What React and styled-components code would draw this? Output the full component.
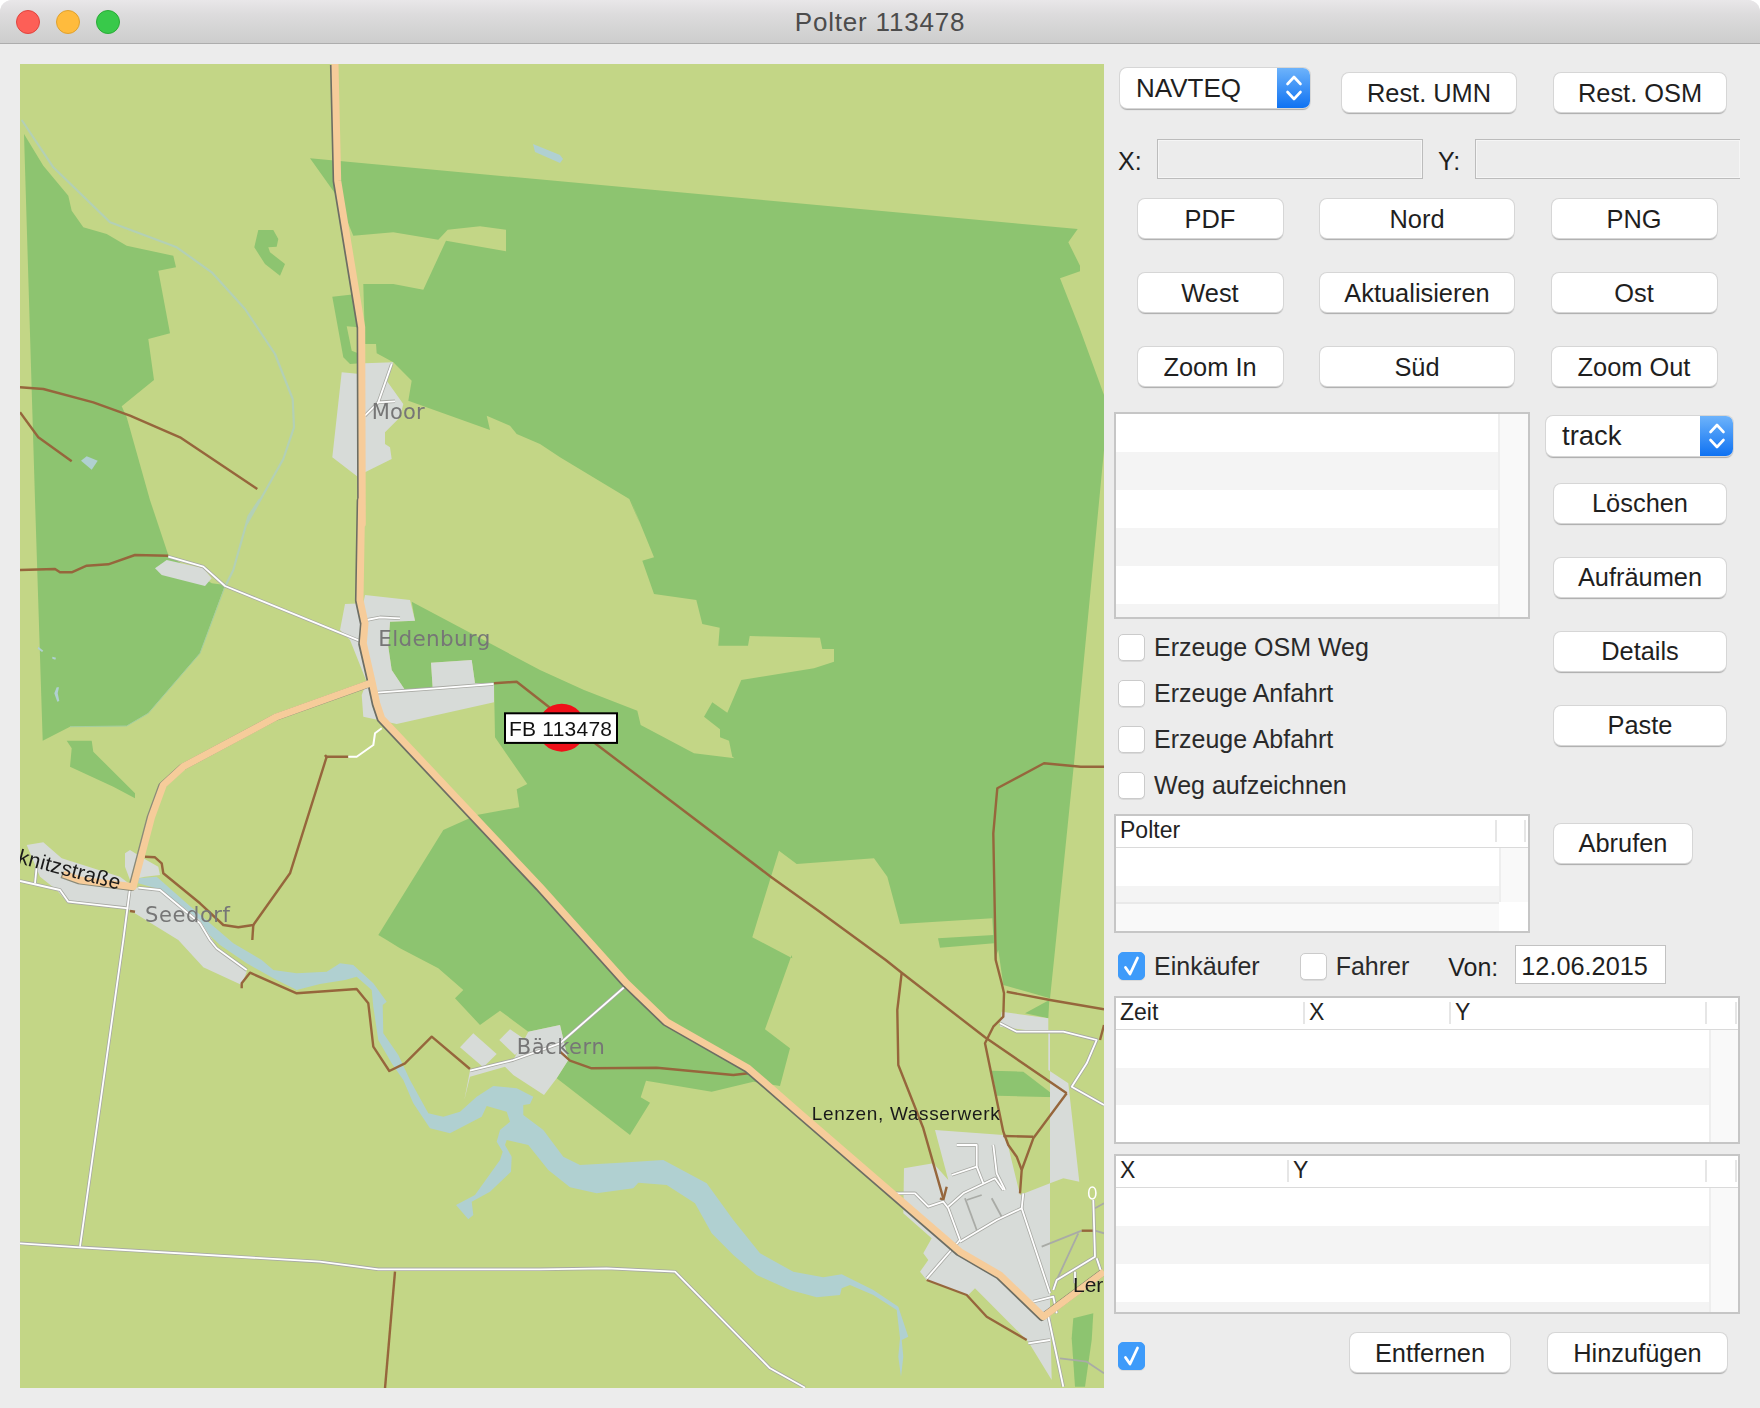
import React from "react";
import styled, { createGlobalStyle } from "styled-components";

const Global = createGlobalStyle`
  html, body { margin: 0; padding: 0; background: #fff; }
  body { width: 1760px; height: 1408px; overflow: hidden; font-family: "Liberation Sans", Arial, sans-serif; }
`;

const Window = styled.div`
  width: 1760px; height: 1408px; background: #ececec; display: flex; flex-direction: column;
  border-radius: 12px 12px 0 0; overflow: hidden;
`;
const TitleBar = styled.div`
  height: 44px; box-sizing: border-box; flex: none; display: flex; align-items: center; gap: 16px; padding-left: 16px;
  background: linear-gradient(#e9e7e9, #dcdbdc 35%, #cdcdcd);
  border-bottom: 1px solid #adadad;
`;
const Light = styled.span`
  width: 24px; height: 24px; border-radius: 50%; box-sizing: border-box;
  background: ${p => p.$c}; border: 1px solid ${p => p.$b};
`;
const Title = styled.div`
  flex: 1; text-align: center; font-size: 26px; color: #4c4c4c; letter-spacing: 0.8px; margin-left: -136px; padding-top: 2px;
`;
const Body = styled.div`
  display: flex; padding: 20px 0 20px 20px; flex: 1;
`;
const MapBox = styled.div`
  width: 1084px; height: 1324px; flex: none; overflow: hidden; background: #c3d686;
  svg { display: block; filter: blur(0.45px); }
`;
const Side = styled.div`
  width: 656px; flex: none; display: flex; flex-direction: column; color: #1f1f1f; font-size: 25px;
`;
const TopRow = styled.div`
  display: flex; align-items: flex-start; padding-left: 16px; margin-top: 4px; height: 45px;
`;
const Combo = styled.div`
  width: ${p => p.$w}px; height: 40px; box-sizing: border-box; background: #fff; border-radius: 7px; display: flex;
  overflow: hidden; align-items: stretch; font-size: ${p => p.$fs}px;
  box-shadow: 0 0 0 1px #d6d6d6, 0 1.5px 1px rgba(0,0,0,.28);
`;
const ComboText = styled.span`
  flex: 1; padding-left: 16px; line-height: 40px;
`;
const ComboArrows = styled.span`
  width: 33px; flex: none; display: flex; align-items: center; justify-content: center;
  background: linear-gradient(#6db3fb, #0f72f2);
`;
const Button = styled.button`
  width: ${p => p.$w}px; height: 39px; box-sizing: border-box; padding: ${p => p.$pt || 0}px 0 0; margin: ${p => p.$m || "0"};
  background: #fff; border: none; border-radius: 7px; font: inherit; font-size: 25.4px; color: #1f1f1f;
  box-shadow: 0 0 0 1px #d6d6d6, 0 1.5px 1px rgba(0,0,0,.28); flex: none;
`;
const CoordRow = styled.div`
  display: flex; align-items: center; padding-left: 14px; margin-top: 26px; height: 40px;
`;
const CoordLabel = styled.span`
  width: ${p => p.$w}px; flex: none; padding-top: 4px; padding-left: ${p => p.$pl || 0}px; box-sizing: border-box;
`;
const CoordInput = styled.div`
  width: ${p => p.$w}px; height: 40px; box-sizing: border-box; flex: none;
  background: #ececec; border: 1px solid #bcbcbc; border-right: ${p => p.$open ? "none" : "1px solid #bcbcbc"};
  box-shadow: inset 0 0 0 1px #f5f5f5;
`;
const NavGrid = styled.div`
  display: grid; grid-template-columns: 145px 194px 165px; column-gap: 37.5px; row-gap: 35px;
  margin: 20px 0 0 33.5px;
`;
const Mid = styled.div`
  display: flex; margin-top: 26px; padding-left: 10px; gap: 16px;
`;
const MidLeft = styled.div`
  width: 416px; flex: none; display: flex; flex-direction: column;
`;
const MidRight = styled.div`
  display: flex; flex-direction: column; align-items: flex-start; padding-top: 4px;
`;
const Frame = styled.div`
  box-sizing: border-box; width: ${p => p.$w}px; height: ${p => p.$h}px; border: 2px solid #c6c6c6; background: #fff;
  display: flex; flex-direction: column; overflow: hidden; flex: none; margin-top: ${p => p.$mt || 0}px;
  margin-left: ${p => p.$ml || 0}px;
`;
const HeaderRow = styled.div`
  display: flex; height: 32px; box-sizing: border-box; flex: none; padding-top: 4px; border-bottom: 1px solid #dadada;
`;
const HeaderCell = styled.div`
  width: ${p => p.$w}px; height: 22px; flex: none; box-sizing: border-box; padding-left: 4px; line-height: 21px;
  font-size: 23px; border-right: 2px solid #e6e6e6; color: #222;
`;
const RowsWrap = styled.div`
  display: flex; flex: ${p => p.$h ? "none" : 1}; height: ${p => p.$h ? `${p.$h}px` : "auto"}; overflow: hidden;
`;
const Rows = styled.div`
  flex: 1; overflow: hidden;
`;
const Row = styled.div`
  height: ${p => p.$h}px; background: ${p => p.$alt ? "#f4f4f4" : "#fff"};
`;
const ScrollCol = styled.div`
  width: ${p => p.$w}px; flex: none; background: #f9f9f9; border-left: 2px solid #eee; box-sizing: border-box;
`;
const LowerBand = styled.div`
  flex: 1; display: flex; border-top: 2px solid #e9e9e9; margin-right: 29px; background: #f9f9f9;
`;
const Checks = styled.div`
  display: flex; flex-direction: column; gap: 19px; margin: 15px 0 0 4px;
`;
const CheckRow = styled.label`
  display: flex; align-items: center; height: 27px; gap: 9px; flex: none; color: #2a2a2a;
  margin: ${p => p.$m || "0"};
`;
const Box = styled.span`
  width: 27px; height: ${p => p.$on ? 28 : 27}px; box-sizing: border-box; border-radius: 5px; flex: none;
  display: flex; align-items: center; justify-content: center;
  background: ${p => p.$on ? "#3e9bfa" : "#fff"};
  border: 1px solid ${p => p.$on ? "#3e9bfa" : "#cbcbcb"};
  box-shadow: 0 1px 0 rgba(0,0,0,.08);
`;
const FilterRow = styled.div`
  display: flex; align-items: center; height: 39px; margin-top: 12px; padding-left: 14px;
`;
const VonLabel = styled.span`
  margin-left: 39px; width: 67px; flex: none; padding-top: 5px;
`;
const DateInput = styled.div`
  width: 151px; height: 39px; box-sizing: border-box; background: #fff; border: 1px solid #c2c2c2; padding-left: 5px; line-height: 41px;
  font-size: 25.3px; flex: none;
`;
const BottomRow = styled.div`
  display: flex; align-items: flex-start; height: 39px; margin-top: 19px; padding-left: 14px;
`;

/* map helpers */
const z = (x0, y0) => s => s.trim().split(/\s+/).map(p => {
  const [a, b] = p.split(",").map(Number);
  return `${(x0 + a / 3).toFixed(1)},${(y0 + b / 3).toFixed(1)}`;
}).join(" ");
const A = z(20, 64), B = z(560, 64), C = z(20, 500), D = z(584, 500), E = z(20, 940), F = z(400, 940), G = z(800, 950);
const J = (...a) => a.join(" ");

const forest = [
  J(A("870,283"), B("1553,495 1525,535 1560,605 1560,622 1500,643 1558,790"), "1104,395 1104,450",
    D("1470,790 1410,1380"), G("750,145 610,105 595,0"), D("1232,1380 1225,1255 948,1272 910,1130 870,1075 638,1092 585,1052 505,1312 625,1375"),
    F("1175,45 1095,268 1170,325 1140,438 1060,425 935,455 738,422 722,472 750,488 690,585 470,415 505,360 480,255 385,275 300,212 240,255 165,175 190,150 115,85 0,25"),
    E("1100,0"), C("1075,1305 1270,990 1370,945 1498,922 1490,868 1522,852 1425,712 1422,550 1365,550 1355,480 1233,488 1238,565 1155,570 1115,510 1105,440 1110,365 1185,362 1175,305 1560,510"),
    D("0,570 160,632 170,675 330,760 495,780 503,808 445,770 435,722 408,712 408,688 360,650 385,607 430,638 472,540 690,505 750,485 750,447 715,447 708,413 497,408 492,437 403,437 407,383 355,372 337,300 210,282 175,182 210,172 140,0"),
    B("240,1380 208,1305 0,1180"),
    A("1560,1140 1490,1110 1470,1085 1400,1055 1410,1098 1165,1010 1175,950 1120,895 1070,868 1068,840 1035,840 1030,660 1120,660 1210,677 1278,530 1458,562 1458,497 1380,487 1283,497 1255,527 1120,505 1000,515 950,395")),
  J(A("12,210 70,305 145,395 155,440 190,490 260,510 320,545 460,575 468,610 415,620 450,808 385,825 402,948 305,1027 320,1060 410,1380"),
    C("390,0 445,165 575,250 615,255 540,460 385,640 320,678 150,680 68,722 45,0")),
  A("937,698 1010,690 1018,790 980,787 995,860 1020,870 1020,898 990,900 970,880"),
  A("715,498 760,498 775,525 770,548 745,550 750,565 795,600 780,635 735,600 703,550"),
  C("140,722 215,722 220,755 345,880 345,895 280,860 150,800 155,745"),
  D("1062,1315 1230,1305 1230,1330 1068,1343"),
  G("575,362 670,365 770,442 590,437"),
  G("675,190 748,150 745,205"),
  G("820,1105 880,1090 875,1170 855,1310 825,1310 815,1165"),
];

const builtup = [
  A("965,925 1020,930 1035,898 1120,895 1100,950 1150,1020 1140,1060 1095,1105 1095,1140 1110,1150 1115,1185 1035,1225 1015,1240 937,1180"),
  C("975,312 1030,310 1035,285 1170,300 1185,362 1110,365 1105,440 1115,510 1155,570 1238,565 1233,488 1355,480 1365,550 1422,550 1422,607 1130,672 1030,650 1025,585 1040,545 990,420 960,390"),
  C("405,205 440,180 550,205 575,235 555,258 425,225"),
  C("315,1060 330,1050 370,1075 415,1100 420,1125 375,1130 330,1140 315,1100"),
  J(C("20,1035 70,1027 125,1075 300,1130 340,1160 430,1175 540,1260"), E("590,20 680,95 665,135 550,82 475,0"), C("320,1225 140,1205 110,1170 60,1130")),
  F("180,322 220,280 290,342 250,382"),
  F("298,300 330,268 385,305 345,345"),
  F("385,275 480,255 505,360 470,415 432,465 340,405 315,380 210,410 193,480 210,392 340,360"),
  G("405,540 610,555 625,590 660,735 750,700 750,250 600,230 605,185 745,205 745,360 805,400 838,695 790,685 750,700 750,1060 755,1290 685,1175 525,1015 505,1035 380,990 360,965 385,930 370,910 395,865 310,790 312,655 400,640 445,690"),
];

const river = J(
  C("355,1135 410,1130 500,1210 640,1330 725,1380"),
  E("760,90 830,100 920,95 960,70 1000,75 1060,130 1100,185 1088,195 1090,280 1135,345 1170,420 1225,520 1270,530 1320,515 1370,470 1420,438 1490,445 1540,470 1530,492"),
  F("370,495 370,525 430,570 490,650 540,675 660,668 790,660 920,730 1000,840 1080,940 1180,995 1270,1012 1325,1003 1420,1050 1495,1100 1525,1190 1505,1200 1510,1250 1503,1310 1495,1250 1500,1195 1490,1110 1420,1065 1350,1035 1325,1045 1320,1065 1250,1072 1170,1050 1070,1005 1000,945 935,880 885,790 800,735 715,728 700,745 590,760 510,742 445,690 385,615 320,600 315,615 335,650 333,695 270,755 215,785 220,825 205,838 168,795 225,765 300,660 308,635 290,605 300,570 330,545 320,515 260,498 245,530 150,580 90,565 40,490"),
  E("1150,420 1115,370 1075,300 1060,200 1055,150 1010,110 975,120 900,132 830,150 760,115 680,70 600,15"),
  C("425,1170 355,1150"));

const ponds = [
  A("183,1190 200,1177 233,1190 215,1217"),
  "533,144 560,155 563,159 560,163 535,152",
  C("110,562 103,580 112,605 118,603 113,580 117,562"),
  C("55,440 70,452 66,456 53,446"),
  C("97,470 108,473 106,479 97,476"),
];

const creek = J(A("5,168 100,310 270,475 470,550 575,625 675,735 765,870 818,1005 822,1090 790,1185 680,1380"), C("718,0 685,50 640,210 615,260"));
const creek2 = C("615,260 540,460 385,640 320,678 150,680");

const brown = [
  A("0,970 70,975 220,1015 330,1055 480,1120 712,1275"),
  A("0,1045 55,1120 155,1192"),
  C("0,210 105,207 120,217 155,217 200,197 265,193 345,165 445,167"),
  J(C("1422,550 1490,545 1560,600"), D("40,735 560,1130 700,1230 905,1380"), G("305,68 555,262 800,430")),
  C("985,770 920,770 810,1120 700,1275 655,1282 610,1275 540,1210 430,1120 425,1090 405,1072 375,1070"),
  C("700,1275 697,1320"),
  C("915,765 922,775"),
  C("330,1233 345,1235"),
  E("665,145 665,130 690,98 830,160 1010,147 1045,190 1060,320 1108,393 1155,370 1235,290 1350,387"),
  E("1125,995 1095,1345"),
  F("480,335 510,362 575,385 770,383 1000,405 1045,400"),
  G("305,68 292,180 295,345 370,535 430,745"),
  G("440,710 430,750 420,745"),
  J(D("1560,800 1490,800 1380,790 1240,865 1228,1000 1235,1380"), G("605,100 612,130 610,200 580,230 555,280 610,545 625,585 650,620 665,660 660,730")),
  G("665,660 700,565 800,430"),
  G("610,558 700,560"),
  G("620,125 750,150 912,178"),
  G("912,225 900,270"),
  G("845,842 885,842"),
  G("380,990 500,1035 560,1100 680,1170"),
];

const tracks = [
  C("445,170 550,200 615,258 1025,425"),
  C("1040,360 1080,352 1140,355"),
  C("1070,578 1250,565 1420,552"),
  A("1115,900 1075,1015 1125,1012"),
  A("1075,1015 1035,1055"),
  C("0,1143 120,1170 145,1205 325,1225"),
  J(C("330,1165"), E("310,0 180,920")),
  C("45,1150 50,1100"),
  J(C("355,1163 420,1170 540,1270"), E("570,0 590,25 680,90")),
  J(E("0,910 180,922 900,965 1075,988"), F("420,988 620,985 825,995 1110,1285 1215,1343")),
  F("210,392 340,360 480,310 680,135"),
  G("600,220 650,245 790,245 890,270 860,340 815,410 912,465"),
  G("285,730 345,730 385,770 430,755 445,775 480,870"),
  G("445,770 490,730 585,685 610,720"),
  G("470,585 530,585 530,650 455,675"),
  G("580,585 590,670 615,720"),
  G("530,650 550,700"),
  G("480,875 590,810 665,775 750,1030"),
  G("480,870 380,985"),
  G("670,730 665,775"),
  G("745,1100 790,1310"),
  G("880,750 885,920 770,990 760,1020"),
  G("890,925 905,970"),
  G("825,965 825,1000"),
  G("685,1180 750,1170"),
  G("700,1055 760,1040 770,1090"),
];
const greyLines = [
  G("725,890 845,842"), G("770,990 835,850"), G("780,1225 860,1235 912,1270"),
  G("495,745 530,840"), G("575,745 605,800"), G("500,750 545,735"), G("885,775 912,760"), G("885,842 912,850"),
];
const mainRoad = J(A("945,0 953,350 1025,790 1027,1380"),
  C("1025,0 1020,300 1035,370 1030,430 1055,540 1070,610 1085,655 1560,1160"),
  F("680,130 800,245 1045,385 1200,520"), G("480,905 600,975 730,1100 912,965"));
const branch = C("1050,550 770,650 490,800 430,855 395,950 340,1160 180,1140 130,1122");

const Poly = styled.polygon`fill: ${p => p.$c};`;
const Line = styled.polyline`
  fill: none; stroke: ${p => p.$c}; stroke-width: ${p => p.$w}; stroke-linejoin: round;
`;
const MapText = styled.text`
  font-family: ${p => p.$sans ? `"Liberation Sans", sans-serif` : `"DejaVu Sans", sans-serif`};
  font-size: ${p => p.$s}px; fill: ${p => p.$c};
`;

const MapView = () => (
  <svg width="1084" height="1324" viewBox="20 64 1084 1324">
    <rect x="20" y="64" width="1084" height="1324" fill="#c3d686" />
    {forest.map((p, i) => <Poly key={i} points={p} $c="#8dc470" />)}
    <Poly points={river} $c="#b0d0d1" />
    {ponds.map((p, i) => <Poly key={i} points={p} $c="#b0d0d1" />)}
    <Line points={creek} $c="#b3d0b5" $w="2.2" />
    <Line points={creek2} $c="#a5cfa0" $w="1" />
    {builtup.map((p, i) => <Poly key={i} points={p} $c="#d7dbd8" />)}
    {greyLines.map((p, i) => <Line key={i} points={p} $c="#a9aba6" $w="1.8" />)}
    {brown.map((p, i) => <Line key={i} points={p} $c="#96663c" $w="2.4" />)}
    {tracks.map((p, i) => <Line key={i} points={p} $c="#a8a9a4" $w="3.4" />)}
    {tracks.map((p, i) => <Line key={i} points={p} $c="#fff" $w="1.8" />)}
    <Line points={C("985,770 1010,770 1060,735 1065,700 1085,685")} $c="#fff" $w="2" />
    <ellipse cx="1092.3" cy="1193" rx="3.6" ry="6" fill="none" stroke="#fff" strokeWidth="1.6" />
    <g transform="translate(-1.6,0.8)">
      <Line points={mainRoad} $c="#6d6e64" $w="7" />
      <Line points={branch} $c="#8a8a78" $w="7" />
    </g>
    <Line points={branch} $c="#f6cc9a" $w="7" />
    <Line points={mainRoad} $c="#f6cc9a" $w="7" />
    <MapText x="371.7" y="419" $s="21" $c="#767676" textLength="53">Moor</MapText>
    <MapText x="378.3" y="645.7" $s="21.5" $c="#767676" textLength="112">Eldenburg</MapText>
    <MapText x="145" y="921.7" $s="21" $c="#767676" textLength="85">Seedorf</MapText>
    <MapText x="516.7" y="1054" $s="21" $c="#767676" textLength="88">Bäckern</MapText>
    <MapText x="811.7" y="1120" $s="19" $c="#1a1a1a" $sans textLength="188">Lenzen, Wasserwerk</MapText>
    <MapText x="1073" y="1291.7" $s="21" $c="#1a1a1a" $sans>Ler</MapText>
    <g transform="translate(17,863) rotate(14.7)">
      <MapText x="0" y="0" $s="21" $c="#1a1a1a" $sans textLength="105">knitzstraße</MapText>
    </g>
    <circle cx="561.7" cy="727.7" r="24" fill="#f01019" />
    <rect x="505" y="713.3" width="112" height="29.6" fill="#fff" stroke="#000" strokeWidth="2" />
    <MapText x="509" y="735.5" $s="21" $c="#111" $sans textLength="103">FB 113478</MapText>
  </svg>
);

const Arrows = () => (
  <svg width="20" height="32" viewBox="0 0 20 32" fill="none" stroke="#fff" strokeWidth="2.6" strokeLinecap="round" strokeLinejoin="round">
    <path d="M3.5 12 L10 5 L16.5 12" />
    <path d="M3.5 20 L10 27 L16.5 20" />
  </svg>
);
const Tick = () => (
  <svg width="19" height="22" viewBox="0 0 19 22" fill="none" stroke="#fff" strokeWidth="2.8" strokeLinecap="round" strokeLinejoin="round">
    <path d="M3.5 12.5 L8 19 L15.5 3" />
  </svg>
);

const Check = ({ label, on, m }) => (
  <CheckRow $m={m}><Box $on={on}>{on && <Tick />}</Box>{label}</CheckRow>
);

const makeRows = (n, h) => Array.from({ length: n }, (_, i) => (
  <Row key={i} $h={h} $alt={i % 2 === 1} />
));

const App = () => (
  <>
    <Global />
    <Window>
      <TitleBar>
        <Light $c="#fd5f57" $b="#e0443e" />
        <Light $c="#ffbb3d" $b="#dfa12f" />
        <Light $c="#38c94a" $b="#2aab37" />
        <Title>Polter 113478</Title>
      </TitleBar>
      <Body>
        <MapBox><MapView /></MapBox>
        <Side>
          <TopRow>
            <Combo $w={190} $fs={26}><ComboText>NAVTEQ</ComboText><ComboArrows><Arrows /></ComboArrows></Combo>
            <Button $w={174} $pt={2} $m="5px 0 0 32px">Rest. UMN</Button>
            <Button $w={172} $pt={2} $m="5px 0 0 38px">Rest. OSM</Button>
          </TopRow>
          <CoordRow>
            <CoordLabel $w={39}>X:</CoordLabel>
            <CoordInput $w={266} />
            <CoordLabel $w={52} $pl={15}>Y:</CoordLabel>
            <CoordInput $w={265} $open />
          </CoordRow>
          <NavGrid>
            <Button $w={145} $pt={2}>PDF</Button>
            <Button $w={194} $pt={2}>Nord</Button>
            <Button $w={165} $pt={2}>PNG</Button>
            <Button $w={145} $pt={2}>West</Button>
            <Button $w={194} $pt={2}>Aktualisieren</Button>
            <Button $w={165} $pt={2}>Ost</Button>
            <Button $w={145} $pt={2}>Zoom In</Button>
            <Button $w={194} $pt={2}>Süd</Button>
            <Button $w={165} $pt={2}>Zoom Out</Button>
          </NavGrid>
          <Mid>
            <MidLeft>
              <Frame $w={416} $h={207}>
                <RowsWrap>
                  <Rows>{makeRows(6, 38)}</Rows>
                  <ScrollCol $w={30} />
                </RowsWrap>
              </Frame>
              <Checks>
                <Check label="Erzeuge OSM Weg" />
                <Check label="Erzeuge Anfahrt" />
                <Check label="Erzeuge Abfahrt" />
                <Check label="Weg aufzeichnen" />
              </Checks>
              <Frame $w={416} $h={119} $mt={15}>
                <HeaderRow>
                  <HeaderCell $w={381}>Polter</HeaderCell>
                  <HeaderCell $w={29} />
                </HeaderRow>
                <RowsWrap $h={54}>
                  <Rows><Row $h={37.5} /><Row $h={17} $alt /></Rows>
                  <ScrollCol $w={29} />
                </RowsWrap>
                <LowerBand />
              </Frame>
            </MidLeft>
            <MidRight>
              <Combo $w={187} $fs={27.5}><ComboText>track</ComboText><ComboArrows><Arrows /></ComboArrows></Combo>
              <Button $w={172} $m="28px 0 0 8px">Löschen</Button>
              <Button $w={172} $m="35px 0 0 8px">Aufräumen</Button>
              <Button $w={172} $m="35px 0 0 8px">Details</Button>
              <Button $w={172} $m="35px 0 0 8px">Paste</Button>
              <Button $w={138} $m="79px 0 0 8px">Abrufen</Button>
            </MidRight>
          </Mid>
          <FilterRow>
            <Check label="Einkäufer" on m="3px 0 0 0" />
            <Check label="Fahrer" m="3px 0 0 40px" />
            <VonLabel>Von:</VonLabel>
            <DateInput>12.06.2015</DateInput>
          </FilterRow>
          <Frame $w={626} $h={148} $mt={12} $ml={10}>
            <HeaderRow>
              <HeaderCell $w={189}>Zeit</HeaderCell>
              <HeaderCell $w={146}>X</HeaderCell>
              <HeaderCell $w={256}>Y</HeaderCell>
              <HeaderCell $w={30} />
            </HeaderRow>
            <RowsWrap>
              <Rows>{makeRows(3, 37.7)}</Rows>
              <ScrollCol $w={29} />
            </RowsWrap>
          </Frame>
          <Frame $w={626} $h={160} $mt={10} $ml={10}>
            <HeaderRow>
              <HeaderCell $w={173}>X</HeaderCell>
              <HeaderCell $w={418}>Y</HeaderCell>
              <HeaderCell $w={30} />
            </HeaderRow>
            <RowsWrap>
              <Rows>{makeRows(4, 38)}</Rows>
              <ScrollCol $w={29} />
            </RowsWrap>
          </Frame>
          <BottomRow>
            <Check on m="9px 0 0 0" />
            <Button $w={160} $pt={2} $m="0 0 0 205px">Entfernen</Button>
            <Button $w={179} $pt={2} $m="0 0 0 38px">Hinzufügen</Button>
          </BottomRow>
        </Side>
      </Body>
    </Window>
  </>
);

export default App;
